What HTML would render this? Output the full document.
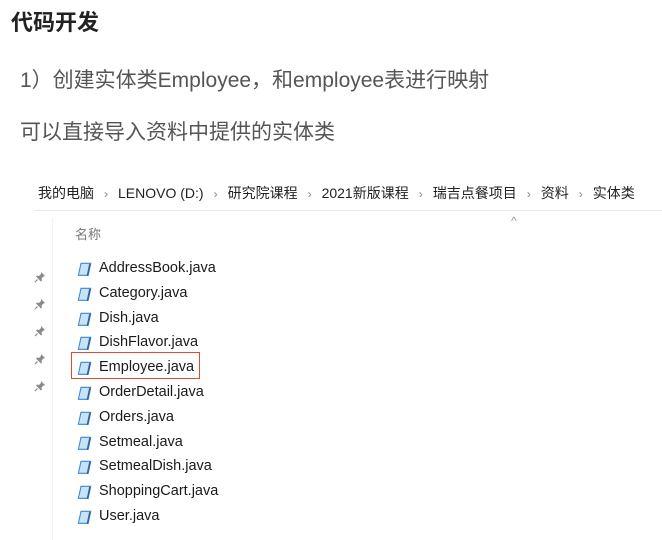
<!DOCTYPE html>
<html><head><meta charset="utf-8"><style>
body{margin:0;width:662px;height:540px;background:#fff;position:relative;overflow:hidden;font-family:"Liberation Sans","Noto Sans CJK SC",sans-serif}
.a{position:absolute;white-space:nowrap}
.t{left:11px;top:5px;font-size:22px;font-weight:bold;color:#222}
.p{font-size:21px;color:#555;left:20px}
.bc{left:38px;top:183px;font-size:14px;color:#222}
.bc span{color:#888;margin:0 10px;font-size:12px}
.f{left:99px;font-size:14.5px;color:#1a1a1a}
.ic{position:absolute;left:76px;width:16px;height:16px}
.pin{position:absolute;left:34px;width:12px;height:12px}
</style></head><body>
<div class="a t">代码开发</div>
<div class="a p" style="top:64px">1）创建实体类Employee，和employee表进行映射</div>
<div class="a p" style="top:116px">可以直接导入资料中提供的实体类</div>
<div class="a bc">我的电脑<span>›</span>LENOVO (D:)<span>›</span>研究院课程<span>›</span>2021新版课程<span>›</span>瑞吉点餐项目<span>›</span>资料<span>›</span>实体类</div>
<div class="a" style="left:35px;top:210px;width:627px;height:1px;background:#e8e8e8"></div>
<div class="a" style="left:52px;top:218px;width:1px;height:322px;background:#f2f2f2"></div>
<div class="a" style="left:511px;top:214px;color:#999;font-size:12px">^</div>
<div class="a" style="left:75px;top:224px;font-size:13px;color:#777">名称</div>
<div id="list"></div>
<div class="a" style="left:71px;top:352px;width:129px;height:27px;border:1.5px solid #e04a2e;box-sizing:border-box"></div>
<script>
var n=["AddressBook.java","Category.java","Dish.java","DishFlavor.java","Employee.java","OrderDetail.java","Orders.java","Setmeal.java","SetmealDish.java","ShoppingCart.java","User.java"];
var h="";
n.forEach(function(s,i){var y=260+i*24.8;
h+='<svg class="ic" style="top:'+(y+1)+'px" viewBox="0 0 14 14"><path d="M4 1.5h9.5l-2.5 11.5H1.5z" fill="#3f86cc"/><path d="M4.8 2.5h7.6l-2 9.5H2.6z" fill="#c6e3f7"/><path d="M11.5 2.5h1.5l-2.3 10.5h-1.4z" fill="#2a64a6"/></svg>';
h+='<div class="a f" style="top:'+y+'px">'+s+'</div>';});
[271,298,325,353,380].forEach(function(y){h+='<svg class="pin" style="top:'+y+'px" viewBox="0 0 12 12"><path d="M7 1l4 4-1.5.5-2 2 .5 2-1 1-5-5 1-1 2 .5 2-2z" fill="#8a8a8a"/><path d="M3.5 8.5L1 11" stroke="#8a8a8a" stroke-width="1.2"/></svg>';});
document.getElementById('list').innerHTML=h;
</script>
</body></html>
